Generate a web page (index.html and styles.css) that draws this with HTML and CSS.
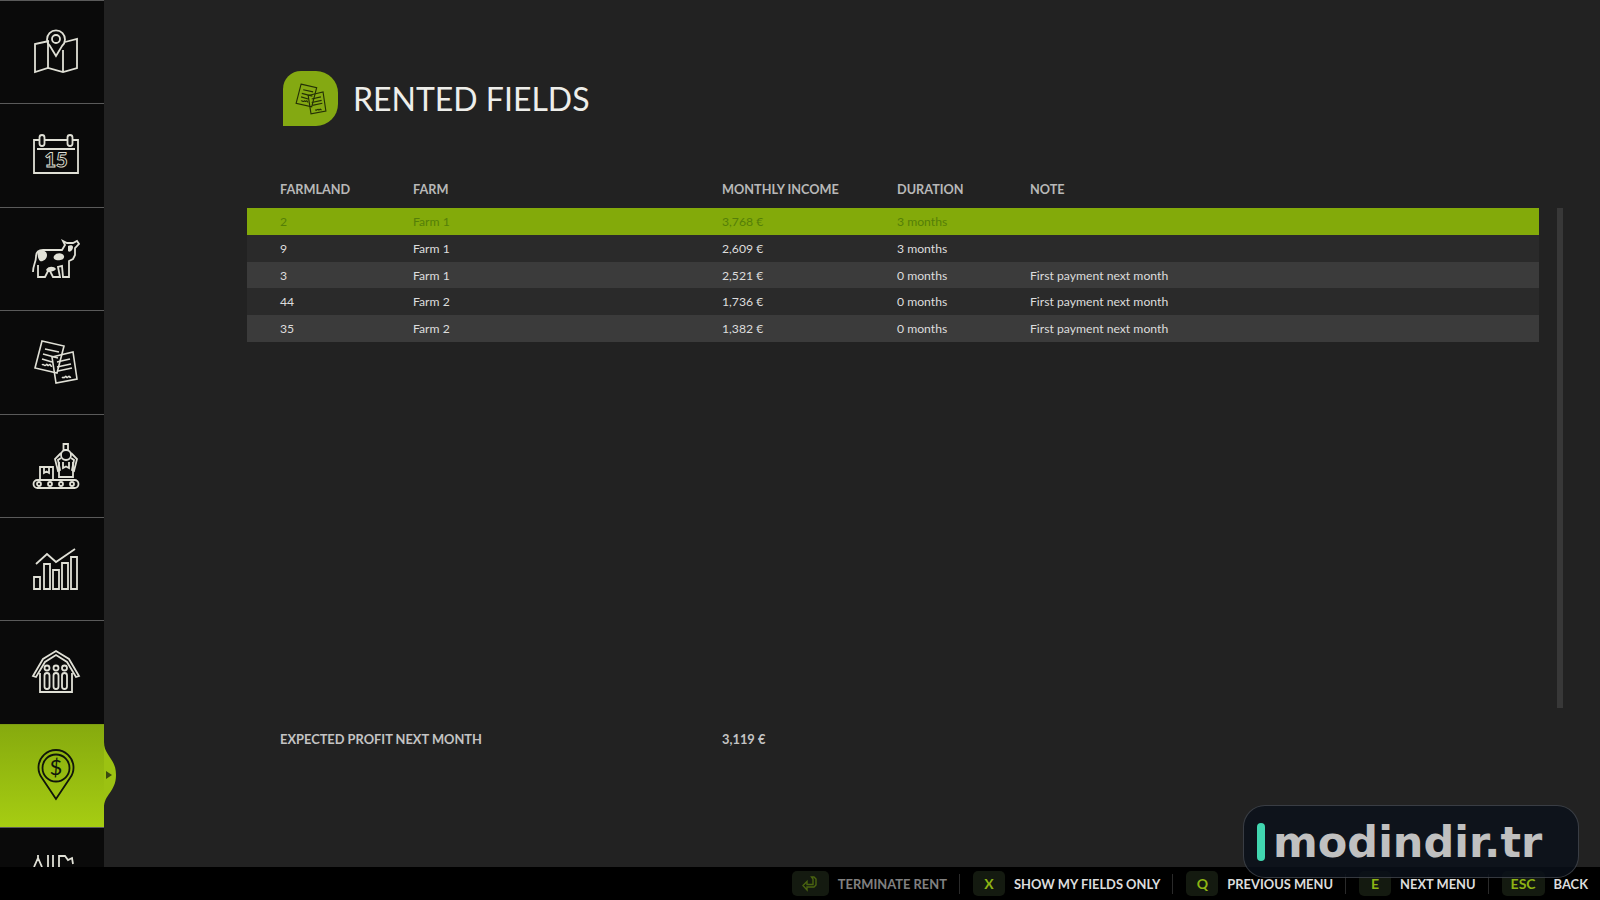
FILE: index.html
```html
<!DOCTYPE html>
<html lang="en">
<head>
    <meta charset="UTF-8">
    <title>Rented Fields</title>
    <link rel="stylesheet" href="styles.css">
</head>
<body>
    <svg class="defs" width="0" height="0">
        <symbol id="papers" viewBox="0 0 48 48">
            <path d="M10 3 32 8 25 35 3 30Z"/>
            <path d="M13 11 27 14M11 16 26 20M10 21 20 24"/>
            <path d="M10 27c2-2 2 2 4 0s1 2 3 0 1 2 3 1"/>
            <path class="sheet" d="M20 19 41 14 45 41 24 45Z"/>
            <path d="M25 24 38 21M25 29 39 26M26 33 40 30"/>
            <path d="M30 40c2-2 1 1 3-1s1 2 3 0 1 1 3 0"/>
        </symbol>
    </svg>

    <div class="screen">
        <nav class="sidebar">
            <div class="nav-item">
                <svg class="nav-icon" viewBox="0 0 48 48">
                    <path d="M17 13 3 16V44L16 40 31 44 45 40V11L33 14"/>
                    <path d="M16 14V40M31 22V44"/>
                    <path d="M24 28 18 18A9 9 0 1 1 30 18Z"/>
                    <circle cx="24" cy="11" r="4"/>
                </svg>
            </div>
            <div class="nav-item">
                <svg class="nav-icon" viewBox="0 0 48 48">
                    <path d="M7 9H2V42H46V9H41M13 9H35"/>
                    <path d="M5 18H43"/>
                    <rect x="7.5" y="4" width="5" height="11" rx="2.5"/>
                    <rect x="35.5" y="4" width="5" height="11" rx="2.5"/>
                    <text class="cal-day" x="24" y="36">15</text>
                </svg>
            </div>
            <div class="nav-item">
                <svg class="nav-icon" viewBox="0 0 48 48">
                    <path d="M1 37C1 30 4 27 4 22 4 17 7 15 11 15H30L33 10 31 6 35 8H41L45 6 47 9 43 13 43 20 41 24 37 26 37 42H31L30 31 26 32 28 42H21L17 34 13 42H6L6 30"/>
                    <path class="spot" d="M6 17C10 14 15 16 15 20 15 25 10 27 8 26 6 24 5 20 6 17ZM22 21C25 17 31 18 32 21 33 25 27 26 24 25 22 24 21 23 22 21ZM14 35C16 31 22 31 24 34 22 37 16 38 14 35ZM36 11C38 10 41 10 41 12 41 15 38 18 36 16Z"/>
                </svg>
            </div>
            <div class="nav-item">
                <svg class="nav-icon"><use href="#papers"/></svg>
            </div>
            <div class="nav-item">
                <svg class="nav-icon" viewBox="0 0 48 48">
                    <rect x="1.5" y="38" width="45" height="8" rx="4"/>
                    <circle cx="7" cy="42" r="2"/><circle cx="18" cy="42" r="2"/>
                    <circle cx="29" cy="42" r="2"/><circle cx="40" cy="42" r="2"/>
                    <path d="M8 38V25H21V38M12 25V31L14.500 29.500 17 31V25"/>
                    <path d="M27 20V35H41V20M31 20V26L34 24.500 37 26V20"/>
                    <path d="M31.500 2H36V8H31.500Z"/>
                    <circle cx="34" cy="13" r="5"/>
                    <path d="M29 11 23 17 26 29 28 28 26 18 29 16M39 11 45 17 42 29 40 28 42 18 39 16"/>
                </svg>
            </div>
            <div class="nav-item">
                <svg class="nav-icon" viewBox="0 0 48 48">
                    <path d="M2 32H8V44H2ZM12 19H18V44H12ZM21 25H27V44H21ZM30 18H36V44H30ZM39 12H45V44H39Z"/>
                    <path d="M4 19 15 9 24 17 43 4"/>
                </svg>
            </div>
            <div class="nav-item">
                <svg class="nav-icon" viewBox="0 0 48 48">
                    <path d="M1 28 11 11 24 3 37 11 47 28 44 29 35 14 24 7 13 14 4 29Z"/>
                    <path d="M8 25V44H40V25"/>
                    <circle cx="15" cy="20" r="2.500"/><circle cx="24" cy="20" r="2.500"/><circle cx="32.500" cy="20" r="2.500"/>
                    <rect x="12.500" y="25" width="5" height="16" rx="2.500"/>
                    <rect x="21.500" y="25" width="5" height="16" rx="2.500"/>
                    <rect x="30" y="25" width="5" height="16" rx="2.500"/>
                </svg>
            </div>
            <div class="nav-item active">
                <svg class="nav-icon" viewBox="0 0 48 48">
                    <path d="M24 47 10 26A17.500 17.500 0 1 1 38 26Z"/>
                    <circle cx="24" cy="16" r="13.500"/>
                    <text class="dollar" x="24" y="23">$</text>
                </svg>
                <svg class="nav-tab" viewBox="0 0 14 66">
                    <path d="M0 0C0 14 12 16 12 33S0 52 0 66Z"/>
                    <path class="nav-arrow" d="M2 29 8 33 2 37Z"/>
                </svg>
            </div>
            <div class="nav-item">
                <svg class="nav-icon" viewBox="0 0 48 48">
                    <path d="M2 12 6 3 10 12M6 3V0M16 0V12M21 0V12M27 12V1H33L36 5 40 3 41 9"/>
                </svg>
            </div>
        </nav>

        <main class="content">
            <header class="page-title">
                <div class="title-icon"><svg><use href="#papers"/></svg></div>
                <h1>RENTED FIELDS</h1>
            </header>

            <div class="columns table-head">
                <span>FARMLAND</span>
                <span>FARM</span>
                <span>MONTHLY INCOME</span>
                <span>DURATION</span>
                <span>NOTE</span>
            </div>

            <div class="table-area">
                <div class="table-rows">
                    <div class="columns row selected"><span>2</span><span>Farm 1</span><span>3,768 €</span><span>3 months</span><span></span></div>
                    <div class="columns row"><span>9</span><span>Farm 1</span><span>2,609 €</span><span>3 months</span><span></span></div>
                    <div class="columns row alt"><span>3</span><span>Farm 1</span><span>2,521 €</span><span>0 months</span><span>First payment next month</span></div>
                    <div class="columns row"><span>44</span><span>Farm 2</span><span>1,736 €</span><span>0 months</span><span>First payment next month</span></div>
                    <div class="columns row alt"><span>35</span><span>Farm 2</span><span>1,382 €</span><span>0 months</span><span>First payment next month</span></div>
                </div>
                <div class="scrollbar"></div>
            </div>

            <div class="columns profit">
                <span class="profit-label">EXPECTED PROFIT NEXT MONTH</span>
                <span>3,119 €</span>
            </div>
        </main>
    </div>

    <footer class="action-bar">
        <div class="action disabled">
            <span class="key">
                <svg width="16" height="16" viewBox="0 0 16 16"><path d="M12 1 14 3V9L12 11H5V14L1 9.500 5 5.500V8.500H11V3L9.500 1Z"/></svg>
            </span>
            TERMINATE RENT
        </div>
        <div class="action"><span class="key">X</span>SHOW MY FIELDS ONLY</div>
        <div class="action"><span class="key">Q</span>PREVIOUS MENU</div>
        <div class="action"><span class="key">E</span>NEXT MENU</div>
        <div class="action"><span class="key">ESC</span>BACK</div>
    </footer>

    <div class="watermark">
        <span class="watermark-bar"></span>
        <span>modindir.tr</span>
    </div>
</body>
</html>
```

FILE: styles.css
```css
html, body {
    height: 100%;
}

body {
    margin: 0;
    background-color: #222222;
    font-family: Lato, "Open Sans", sans-serif;
    color: #dddddd;
    display: flex;
    flex-direction: column;
    overflow: hidden;
}

.defs {
    position: absolute;
}

#papers path {
    fill: none;
    stroke: currentColor;
    stroke-width: 1.6;
}

.screen {
    flex: 1;
    min-height: 0;
    display: flex;
    overflow: hidden;
}

/* left menu */
.sidebar {
    flex: 0 0 104px;
    background-color: #0a0a0a;
    display: flex;
    flex-direction: column;
}

.nav-item {
    flex: 0 0 103.4px;
    box-sizing: border-box;
    border-top: 1px solid #5a5a5a;
    padding: 27px 0 0 32px;
    position: relative;
    color: #e0e0d6;
}

.nav-item.active {
    background: linear-gradient(#86aa0e, #a6cd12);
    border-top-color: #7c9c12;
    color: #10160a;
    z-index: 1;
}

.nav-icon {
    display: block;
    width: 48px;
    height: 48px;
    overflow: visible;
    fill: none;
    stroke: currentColor;
    stroke-width: 1.8;
}

.cal-day {
    font-family: Lato, sans-serif;
    font-weight: 900;
    font-size: 20px;
    text-anchor: middle;
    stroke-width: 0.9;
    text-rendering: geometricPrecision;
}

.dollar {
    font-family: Lato, sans-serif;
    font-size: 22px;
    text-anchor: middle;
    fill: currentColor;
    stroke: none;
}

.spot {
    fill: currentColor;
    stroke: none;
}

.nav-tab {
    position: absolute;
    left: 104px;
    top: 17px;
    width: 14px;
    height: 66px;
    fill: #9cc212;
    stroke: none;
}

.nav-arrow {
    fill: #3a4a10;
}

/* page */
.content {
    flex: 1;
    min-width: 0;
    padding: 71px 0 0 143px;
}

.page-title {
    display: flex;
    align-items: center;
    gap: 15px;
    margin-left: 36px;
    height: 55px;
}

.page-title h1 {
    margin: 0;
    font-size: 32px;
    font-weight: 400;
    color: #eeeeea;
}

.title-icon {
    width: 55px;
    height: 55px;
    background-color: #84a912;
    border-radius: 18px 22px 22px 0;
    color: #243006;
    display: flex;
    align-items: center;
    justify-content: center;
}

.title-icon svg {
    width: 34px;
    height: 34px;
}

.columns {
    display: grid;
    grid-template-columns: 133px 309px 175px 133px 1fr;
    padding-left: 33px;
    font-size: 12.2px;
    align-items: center;
}

.table-head {
    margin-top: 53px;
    height: 20px;
    width: 1292px;
    box-sizing: border-box;
    font-size: 12.7px;
    font-weight: 700;
    color: #b8b8b8;
}

.table-area {
    display: flex;
    gap: 18px;
    height: 500px;
    margin-top: 9px;
}

.table-rows {
    flex: 0 0 1292px;
}

.row {
    height: 26.8px;
    padding-top: 0.4px;
    box-sizing: border-box;
    background-color: #2a2a2a;
}

.row.alt {
    background-color: #3b3b3b;
}

.row.selected {
    background-color: #83aa0a;
    color: #557f08;
}

.scrollbar {
    width: 6px;
    background-color: #383838;
}

.profit {
    margin-top: 23px;
    font-size: 12.85px;
    font-weight: 700;
    color: #c4c4c4;
    grid-template-columns: 442px 1fr;
}

/* bottom bar */
.action-bar {
    flex: 0 0 33px;
    background-color: #000000;
    display: flex;
    justify-content: flex-end;
    align-items: center;
    padding-right: 12px;
    font-size: 12.9px;
    font-weight: 700;
    color: #dcdcdc;
}

.action {
    display: flex;
    align-items: center;
    gap: 9px;
    padding: 0 12px 0 13px;
    border-right: 1px solid #2a2a2a;
    height: 20px;
}

.action:last-child {
    border-right: none;
    padding-right: 0;
}

.action.disabled {
    color: #808080;
}

.key {
    min-width: 32px;
    height: 25px;
    padding: 0 9px;
    box-sizing: border-box;
    border-radius: 5px;
    background-color: #141a10;
    color: #8db414;
    display: flex;
    align-items: center;
    justify-content: center;
    font-size: 14px;
}

.disabled .key {
    min-width: 37px;
    padding: 0;
    color: #4a6410;
}

.key svg {
    fill: none;
    stroke: currentColor;
    stroke-width: 1.4;
}

/* site stamp over the corner */
.watermark {
    position: absolute;
    left: 1243px;
    top: 805px;
    width: 336px;
    height: 73px;
    box-sizing: border-box;
    padding-left: 13px;
    display: flex;
    align-items: center;
    gap: 8px;
    border: 1px solid rgba(255, 255, 255, 0.18);
    border-radius: 22px;
    background-color: rgba(10, 16, 26, 0.82);
    font-family: "DejaVu Sans", sans-serif;
    font-weight: 700;
    font-size: 43px;
    color: #c0c0c0;
}

.watermark-bar {
    width: 8px;
    height: 38px;
    border-radius: 4px;
    background-color: #41d6b0;
}
```
